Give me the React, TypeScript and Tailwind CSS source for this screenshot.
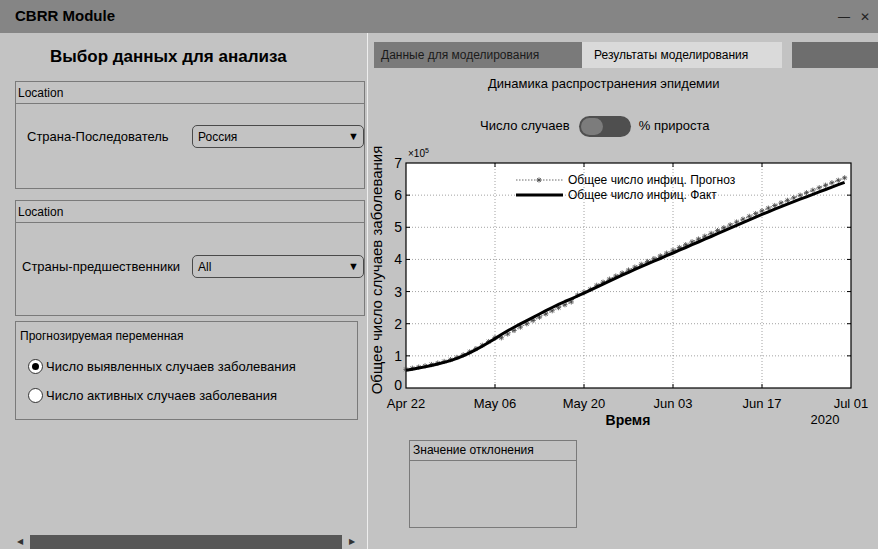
import React from 'react'

// forecast vs actual cumulative cases, values in 1e5, one point per day from Apr 22
const knots: [number, number][] = [
  [0, 0.55], [4, 0.7], [8, 0.92], [12, 1.3], [16, 1.78], [20, 2.2], [24, 2.6], [28, 2.95],
  [35, 3.6], [42, 4.2], [49, 4.8], [56, 5.4], [63, 5.95], [69, 6.4],
]

// Catmull-Rom through the knots so the curve has no corners
function interp(d: number) {
  let i = 1
  while (i < knots.length - 1 && d > knots[i][0]) i++
  const p0 = knots[Math.max(i - 2, 0)]
  const p1 = knots[i - 1]
  const p2 = knots[i]
  const p3 = knots[Math.min(i + 1, knots.length - 1)]
  const t = (d - p1[0]) / (p2[0] - p1[0])
  const m1 = (p2[1] - p0[1]) / (p2[0] - p0[0] || 1) * (p2[0] - p1[0])
  const m2 = (p3[1] - p1[1]) / (p3[0] - p1[0] || 1) * (p2[0] - p1[0])
  const t2 = t * t
  const t3 = t2 * t
  return (2 * t3 - 3 * t2 + 1) * p1[1] + (t3 - 2 * t2 + t) * m1 + (-2 * t3 + 3 * t2) * p2[1] + (t3 - t2) * m2
}

const days = Array.from({ length: 70 }, (_, i) => i)
const fact = days.map((d) => interp(d))
const forecast = days.map((d) => {
  const v = interp(d)
  if (d > 14 && d < 27) return v - 0.1
  if (d >= 30) return v + 0.06 + (d - 30) * 0.002
  return v + 0.03
})

const X0 = 408
const X1 = 853
const Y0 = 389
const Y1 = 164
const sx = (d: number) => X0 + (d * (X1 - X0)) / 70
const sy = (v: number) => Y0 - (v * (Y0 - Y1)) / 7

const toPath = (vals: number[]) =>
  vals.map((v, i) => `${i ? 'L' : 'M'}${sx(i).toFixed(1)},${sy(v).toFixed(1)}`).join(' ')

function Star({ x, y }: { x: number; y: number }) {
  const r = 2.6
  return (
    <path
      d={`M${x - r},${y} L${x + r},${y} M${x},${y - r} L${x},${y + r} M${x - 1.9},${y - 1.9} L${x + 1.9},${y + 1.9} M${x - 1.9},${y + 1.9} L${x + 1.9},${y - 1.9}`}
      stroke="#444"
      strokeWidth={0.8}
    />
  )
}

const xTicks = [
  { d: 0, label: 'Apr 22' },
  { d: 14, label: 'May 06' },
  { d: 28, label: 'May 20' },
  { d: 42, label: 'Jun 03' },
  { d: 56, label: 'Jun 17' },
  { d: 70, label: 'Jul 01' },
]

function CasesChart() {
  const font = '"Liberation Sans", Arial, sans-serif'
  return (
    <svg width={508} height={295} viewBox="370 140 508 295" style={{ fontFamily: font }}>
      <rect x={X0} y={Y1} width={X1 - X0} height={Y0 - Y1} fill="#fff" />
      {/* grid */}
      {xTicks.slice(1, 5).map((t) => (
        <line key={t.d} x1={sx(t.d)} x2={sx(t.d)} y1={Y1} y2={Y0} stroke="#8a8a8a" strokeWidth={0.8} strokeDasharray="1 2" />
      ))}
      {[1, 2, 3, 4, 5, 6].map((v) => (
        <line key={v} x1={X0} x2={X1} y1={sy(v)} y2={sy(v)} stroke="#8a8a8a" strokeWidth={0.8} strokeDasharray="1 2" />
      ))}
      {/* ticks */}
      {xTicks.slice(1, 5).map((t) => (
        <g key={t.d}>
          <line x1={sx(t.d)} x2={sx(t.d)} y1={Y0} y2={Y0 - 4} stroke="#000" />
          <line x1={sx(t.d)} x2={sx(t.d)} y1={Y1} y2={Y1 + 4} stroke="#000" />
        </g>
      ))}
      {[1, 2, 3, 4, 5, 6].map((v) => (
        <g key={v}>
          <line x1={X0} x2={X0 + 4} y1={sy(v)} y2={sy(v)} stroke="#000" />
          <line x1={X1} x2={X1 - 4} y1={sy(v)} y2={sy(v)} stroke="#000" />
        </g>
      ))}
      <rect x={X0} y={Y1} width={X1 - X0} height={Y0 - Y1} fill="none" stroke="#000" strokeWidth={1.2} />

      {/* series */}
      <path d={toPath(forecast)} fill="none" stroke="#444" strokeWidth={0.8} strokeDasharray="1.5 1.5" />
      {forecast.map((v, i) => (
        <Star key={i} x={sx(i)} y={sy(v)} />
      ))}
      <path d={toPath(fact)} fill="none" stroke="#000" strokeWidth={3} strokeLinejoin="round" />

      {/* legend */}
      <line x1={518} x2={565} y1={181} y2={181} stroke="#444" strokeWidth={0.8} strokeDasharray="1.5 1.5" />
      <Star x={541} y={181} />
      <text x={570} y={185} fontSize={12} fill="#000">Общее число инфиц. Прогноз</text>
      <line x1={518} x2={565} y1={196} y2={196} stroke="#000" strokeWidth={3} />
      <text x={570} y={200} fontSize={12} fill="#000">Общее число инфиц. Факт</text>

      {/* axis labels */}
      {[0, 1, 2, 3, 4, 5, 6, 7].map((v) => (
        <text key={v} x={404} y={sy(v) + (v === 0 ? 2 : 5)} fontSize={14} textAnchor="end" fill="#000">
          {v}
        </text>
      ))}
      <text x={410} y={158} fontSize={10} fill="#000">
        ×10<tspan dy={-4} fontSize={7}>5</tspan>
      </text>
      {xTicks.map((t) => (
        <text key={t.d} x={sx(t.d)} y={409} fontSize={13} textAnchor="middle" fill="#000">
          {t.label}
        </text>
      ))}
      <text x={630} y={426} fontSize={14} fontWeight="bold" textAnchor="middle" fill="#000">
        Время
      </text>
      <text x={827} y={425} fontSize={13} textAnchor="middle" fill="#000">
        2020
      </text>
      <text
        x={0}
        y={0}
        fontSize={15}
        textAnchor="middle"
        fill="#000"
        transform="translate(384 271) rotate(-90)"
      >
        Общее число случаев заболевания
      </text>
    </svg>
  )
}

function Dropdown({ value }: { value: string }) {
  return (
    <div className="flex h-[23px] w-[172px] items-center justify-between rounded-[5px] border border-[#4a4a4a] pl-[5px] pr-[4px] text-[12px]">
      <span>{value}</span>
      <span className="text-[11px]">▼</span>
    </div>
  )
}

function Radio({ checked, label }: { checked?: boolean; label: string }) {
  return (
    <div className="flex items-center gap-[3px] text-[13px]">
      <span className="flex h-[15px] w-[15px] items-center justify-center rounded-full border border-[#333] bg-white">
        {checked && <span className="h-[7px] w-[7px] rounded-full bg-black" />}
      </span>
      <span>{label}</span>
    </div>
  )
}

export default function App() {
  return (
    <div
      className="flex h-[549px] w-[878px] flex-col overflow-hidden bg-[#c3c3c3] text-black"
      style={{ fontFamily: '"Liberation Sans", Arial, sans-serif' }}
    >
      {/* window title */}
      <div className="flex h-[33px] items-center justify-between bg-[#858585] pl-[15px] pr-[8px]">
        <span className="text-[15px] font-bold">CBRR Module</span>
        <div className="flex items-center gap-[10px] text-[12px] text-[#222]">
          <span>—</span>
          <span>✕</span>
        </div>
      </div>

      <div className="flex flex-1">
        {/* left: data selection */}
        <div className="flex w-[368px] flex-col border-r border-[#eeeeee]">
          <div className="flex h-[48px] items-center pl-[50px] text-[17px] font-bold">Выбор данных для анализа</div>

          <div className="ml-[15px] flex h-[108px] w-[350px] flex-col border border-[#7a7a7a]">
            <div className="flex h-[22px] items-center border-b border-[#7a7a7a] pl-[2px] text-[12px]">Location</div>
            <div className="flex items-center justify-between pl-[11px] pt-[21px] text-[13px]">
              <span>Страна-Последователь</span>
              <Dropdown value="Россия" />
            </div>
          </div>

          <div className="ml-[15px] mt-[11px] flex h-[116px] w-[350px] flex-col border border-[#7a7a7a]">
            <div className="flex h-[22px] items-center border-b border-[#7a7a7a] pl-[2px] text-[12px]">Location</div>
            <div className="flex items-center justify-between pl-[6px] pt-[32px] text-[13px]">
              <span>Страны-предшественники</span>
              <Dropdown value="All" />
            </div>
          </div>

          <div className="ml-[15px] mt-[5px] flex h-[99px] w-[343px] flex-col border border-[#7a7a7a]">
            <div className="pl-[4px] pt-[5px] text-[12px]">Прогнозируемая переменная</div>
            <div className="flex flex-col gap-[9px] pl-[12px] pt-[12px]">
              <Radio checked label="Число выявленных случаев заболевания" />
              <Radio label="Число активных случаев заболевания" />
            </div>
          </div>

          {/* horizontal scrollbar */}
          <div className="mt-auto flex h-[14px] items-center">
            <span className="w-[30px] pl-[17px] text-[8px] text-[#333]">◀</span>
            <div className="h-full w-[312px] bg-[#575757]" />
            <span className="pl-[7px] text-[8px] text-[#333]">▶</span>
          </div>
        </div>

        {/* right: tabs with results */}
        <div className="flex flex-1 flex-col">
          <div className="mt-[9px] flex h-[26px] pl-[6px]">
            <div className="flex w-[208px] items-center bg-[#7a7a7a] pl-[7px] text-[12px] text-[#1a1a1a]">
              Данные для моделирования
            </div>
            <div className="flex w-[200px] items-center bg-[#dadada] pl-[12px] text-[12px]">Результаты моделирования</div>
            <div className="ml-[10px] flex-1 bg-[#6e6e6e]" />
          </div>

          <div className="mt-[6px] pl-[120px] text-[13px]">Динамика распространения эпидемии</div>

          <div className="mt-[22px] flex items-center pl-[112px] text-[13px]">
            <span>Число случаев</span>
            <div className="ml-[9px] flex h-[21px] w-[52px] items-center rounded-full bg-[#4f4f4f] pl-[2px]">
              <span className="h-[17px] w-[22px] rounded-full bg-[#7c7c7c]" />
            </div>
            <span className="ml-[8px]">% прироста</span>
          </div>

          <div className="mt-[2px]">
            <CasesChart />
          </div>

          <div className="ml-[41px] mt-[6px] flex h-[88px] w-[168px] flex-col border border-[#7a7a7a]">
            <div className="flex h-[20px] items-center border-b border-[#7a7a7a] pl-[3px] text-[12px]">Значение отклонения</div>
          </div>
        </div>
      </div>
    </div>
  )
}
